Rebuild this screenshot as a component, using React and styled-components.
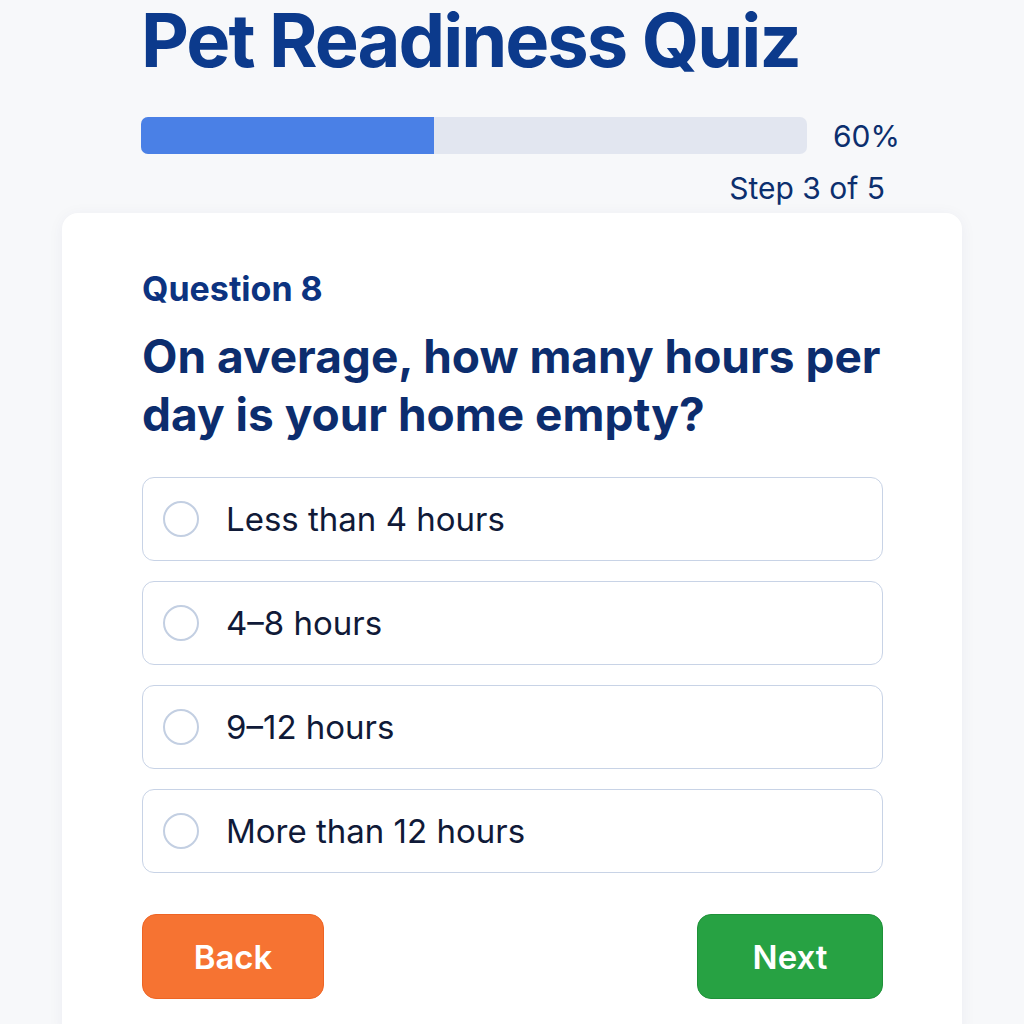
import React from 'react'
import styled, { createGlobalStyle } from 'styled-components'

const options = ['Less than 4 hours', '4–8 hours', '9–12 hours', 'More than 12 hours']

const App = () => {
  const [picked, setPicked] = React.useState(null)
  const progress = 44

  return (
    <>
      <GlobalStyle />
      <Page>
        <Header>
          <Title>Pet Readiness Quiz</Title>
          <ProgressRow>
            <Track>
              <Fill style={{ width: `${progress}%` }} />
            </Track>
            <Percent>60%</Percent>
          </ProgressRow>
          <StepText>Step 3 of 5</StepText>
        </Header>
        <Card>
          <QuestionLabel>Question 8</QuestionLabel>
          <QuestionText>On average, how many hours per day is your home empty?</QuestionText>
          <OptionList>
            {options.map((opt, i) => (
              <Option key={opt} onClick={() => setPicked(i)}>
                <Radio $checked={picked === i} />
                <OptionText>{opt}</OptionText>
              </Option>
            ))}
          </OptionList>
          <Actions>
            <NavButton $bg='#f67332' $border='#ee6424'>Back</NavButton>
            <NavButton $bg='#27a243' $border='#1f9139' $wide>Next</NavButton>
          </Actions>
        </Card>
      </Page>
    </>
  )
}

export default App

const GlobalStyle = createGlobalStyle`
  body {
    margin: 0;
    background: #f7f8fa;
    font-family: Inter, "Noto Sans", sans-serif;
  }
`

const Page = styled.div`
  width: 900px;
  margin: 0 auto;
  display: flex;
  flex-direction: column;
`

const Header = styled.div`
  display: flex;
  flex-direction: column;
  padding: 0 64px 0 79px;
`

const Title = styled.h1`
  margin: 0;
  font-size: 74px;
  line-height: 1.1;
  font-weight: 700;
  letter-spacing: -2px;
  color: #0c3a8c;
`

const ProgressRow = styled.div`
  display: flex;
  align-items: center;
  gap: 26px;
  margin-top: 36px;
`

const Track = styled.div`
  flex-shrink: 0;
  width: 666px;
  height: 37px;
  border-radius: 7px;
  background: #e2e6f0;
  overflow: hidden;
`

const Fill = styled.div`
  height: 100%;
  background: #4a80e6;
`

const Percent = styled.span`
  font-size: 30px;
  color: #0c2f6e;
`

const StepText = styled.div`
  align-self: flex-end;
  margin: 16px 13px 0 0;
  font-size: 30px;
  color: #0c2f6e;
`

const Card = styled.div`
  margin-top: 7px;
  background: #fff;
  border-radius: 16px;
  box-shadow: 0 2px 16px rgba(20, 40, 90, 0.05);
  padding: 55px 79px 40px 80px;
  display: flex;
  flex-direction: column;
`

const QuestionLabel = styled.div`
  font-size: 34px;
  font-weight: 700;
  color: #0c3380;
`

const QuestionText = styled.h2`
  margin: 18px 0 0;
  font-size: 46px;
  line-height: 58px;
  font-weight: 700;
  color: #0c2d6e;
`

const OptionList = styled.div`
  display: flex;
  flex-direction: column;
  gap: 20px;
  margin-top: 34px;
`

const Option = styled.label`
  display: flex;
  align-items: center;
  gap: 27px;
  height: 84px;
  padding: 0 20px;
  box-sizing: border-box;
  border: 1.5px solid #c8d3e6;
  border-radius: 12px;
  cursor: pointer;
`

const Radio = styled.span`
  width: 36px;
  height: 36px;
  box-sizing: border-box;
  border-radius: 50%;
  border: 2px solid ${({ $checked }) => ($checked ? '#4a80e6' : '#c3cfe2')};
  background: ${({ $checked }) => ($checked ? '#4a80e6' : '#fff')};
`

const OptionText = styled.span`
  font-size: 33px;
  color: #101a38;
`

const Actions = styled.div`
  display: flex;
  justify-content: space-between;
  margin-top: 41px;
`

const NavButton = styled.button`
  width: ${({ $wide }) => ($wide ? '186px' : '182px')};
  height: 85px;
  border-radius: 14px;
  border: 1.5px solid ${({ $border }) => $border};
  background: ${({ $bg }) => $bg};
  color: #fff;
  font-family: Inter, "Noto Sans", sans-serif;
  font-size: 33px;
  font-weight: 600;
  cursor: pointer;
`
